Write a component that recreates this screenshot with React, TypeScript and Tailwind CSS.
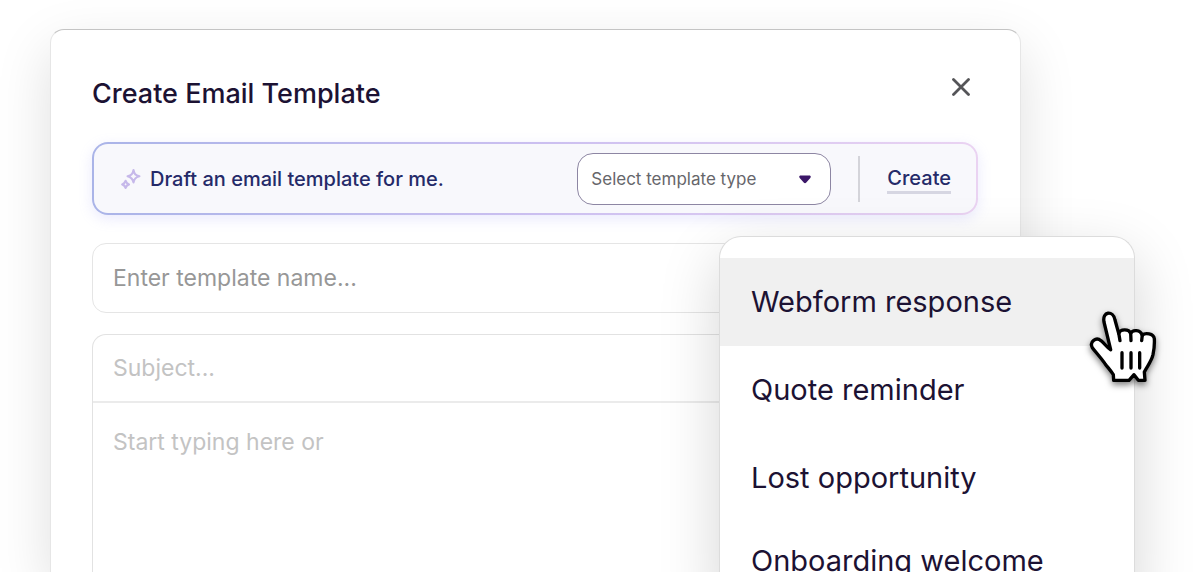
import { useState } from "react";

const templateTypes = ["Webform response", "Quote reminder", "Lost opportunity", "Onboarding welcome"];

function SparkleIcon() {
  return (
    <svg viewBox="0 0 22 22" className="size-[22px] shrink-0" fill="none" stroke="#c6b8ea" strokeWidth="2.2" strokeLinejoin="round" aria-hidden="true">
      <path d="M13.5 2.2 C14.2 6 15.3 7.2 19.4 8.3 C15.3 9.4 14.2 10.8 13.5 14.4 C12.8 10.8 11.5 9.4 7.6 8.3 C11.5 7.2 12.8 6 13.5 2.2 Z" />
      <path d="M5.6 12.8 C6.2 14.8 7 15.6 9 16.4 C7 17.1 6.2 18 5.6 19.9 C4.9 18 4.1 17.1 2.2 16.4 C4.1 15.6 4.9 14.8 5.6 12.8 Z" />
    </svg>
  );
}

function PointerHand() {
  return (
    <svg
      viewBox="50 50 219 240"
      className="pointer-events-none absolute top-[71px] -right-[26px] h-20 w-[73px] overflow-visible drop-shadow-[0_3px_3px_rgba(0,0,0,0.5)]"
      fill="none"
      stroke="#000"
      strokeWidth="10"
      strokeLinecap="round"
      strokeLinejoin="round"
      aria-hidden="true"
    >
      <path
        fill="#fff"
        d="M121 175 L101 92 C95 60 128 56 134 86 L145 126 C150 113 175 112 181 126 C187 114 210 115 216 132 C224 123 250 126 252 142 C253 160 251 176 248 190 C243 211 231 224 222 242 L224 267 L204 267 L191 250 L176 267 L130 267 L129 250 C120 236 112 228 104 217 C91 198 77 184 66 169 C56 150 78 136 92 148 C103 156 109 169 121 175 Z"
      />
      <path d="M145 124 L149 148 M181 124 L182 148 M216 130 L214 148" />
      <path d="M155 184 V230 M182 184 V230 M208 184 V230" />
    </svg>
  );
}

function TemplateMenu({ onSelect }: { onSelect: (type: string) => void }) {
  return (
    <div className="absolute top-[206px] -right-[115px] w-[416px] rounded-t-[22px] border border-b-0 border-[#dcdcdc] bg-white pt-[21px] shadow-[0_20px_60px_rgba(0,0,0,0.17)]">
      <ul>
        {templateTypes.map((type) => (
          <li key={type} className="group">
            <button
              type="button"
              onClick={() => onSelect(type)}
              className="flex h-[88px] w-full items-center px-[31px] text-left text-[29px] whitespace-nowrap text-[#1c1233] group-first:bg-[#f0f0f0] group-last:h-[77px]"
            >
              {type}
            </button>
          </li>
        ))}
      </ul>
      <PointerHand />
    </div>
  );
}

export default function App() {
  const [type, setType] = useState("");

  return (
    <main className="flex h-screen flex-col overflow-hidden bg-white pt-[29px] pr-[179px] pl-[50px] font-['Inter',sans-serif]">
      <section className="relative flex flex-1 flex-col rounded-t-[14px] border border-b-0 border-x-[#e6e6e6] border-t-[#c4c4c4] bg-white pr-[42px] pl-[41px] shadow-[0_20px_56px_rgba(0,0,0,0.13)]">
        <header className="flex items-center justify-between pt-11">
          <h1 className="text-[27px] leading-10 font-medium text-[#1c1233]">Create Email Template</h1>
          <button type="button" aria-label="Close" className="mr-2 mb-[14px] flex size-[18px] items-center justify-center">
            <svg viewBox="0 0 18 18" className="size-[18px]" stroke="#555558" strokeWidth="2.8" strokeLinecap="round" aria-hidden="true">
              <path d="M1.5 1.5 L16.5 16.5 M16.5 1.5 L1.5 16.5" />
            </svg>
          </button>
        </header>

        <div className="mt-7 rounded-2xl bg-linear-to-r from-[#aab4e8] via-[#cbbff0] to-[#ead3f2] p-[2px] shadow-[0_4px_14px_rgba(150,150,245,0.2)]">
          <div className="flex h-[69px] items-center rounded-[14px] bg-[#f8f8fc] pr-[25px] pl-[26px]">
            <SparkleIcon />
            <p className="ml-2 flex-1 text-xl font-medium text-[#252a69]">Draft an email template for me.</p>
            <div className="relative">
              <select
                aria-label="Template type"
                value={type}
                onChange={(e) => setType(e.target.value)}
                className="h-[52px] w-[254px] appearance-none rounded-2xl border border-[#8d86a3] bg-white px-[13px] pt-[3px] text-[17px] text-[#66666b]"
              >
                <option value="">Select template type</option>
                {templateTypes.map((t) => (
                  <option key={t}>{t}</option>
                ))}
              </select>
              <svg viewBox="0 0 12 9" className="pointer-events-none absolute top-[22px] right-5 h-[9px] w-3" fill="#3b1768" aria-hidden="true">
                <path d="M1.6 0.5 H10.4 C11.8 0.5 12.2 2 11.3 3 L7.3 7.6 C6.5 8.5 5.5 8.5 4.7 7.6 L0.7 3 C-0.2 2 0.2 0.5 1.6 0.5 Z" />
              </svg>
            </div>
            <div className="ml-[27px] h-[46px] w-[2px] bg-[#d4d4da]" />
            <button type="button" className="ml-[27px] border-b-[3px] border-[#d6d6e2] pt-[2px] text-xl leading-[26px] font-medium text-[#252a69]">
              Create
            </button>
          </div>
        </div>

        <input
          type="text"
          aria-label="Template name"
          placeholder="Enter template name..."
          className="mt-7 h-[70px] w-full shrink-0 rounded-[14px] border border-[#e5e5e5] px-5 text-[23px] outline-none placeholder:text-[#979797]"
        />

        <div className="mt-[21px] flex flex-1 flex-col rounded-t-[14px] border border-b-0 border-[#e2e2e2]">
          <input
            type="text"
            aria-label="Subject"
            placeholder="Subject..."
            className="h-[68px] w-full shrink-0 border-b-2 border-[#ebebeb] px-5 text-[23px] outline-none placeholder:text-[#c3c3c3]"
          />
          <textarea
            aria-label="Message"
            placeholder="Start typing here or"
            className="w-full flex-1 resize-none px-5 pt-[22px] text-[23px] outline-none placeholder:text-[#c3c3c3]"
          />
        </div>

        <TemplateMenu onSelect={setType} />
      </section>
    </main>
  );
}
